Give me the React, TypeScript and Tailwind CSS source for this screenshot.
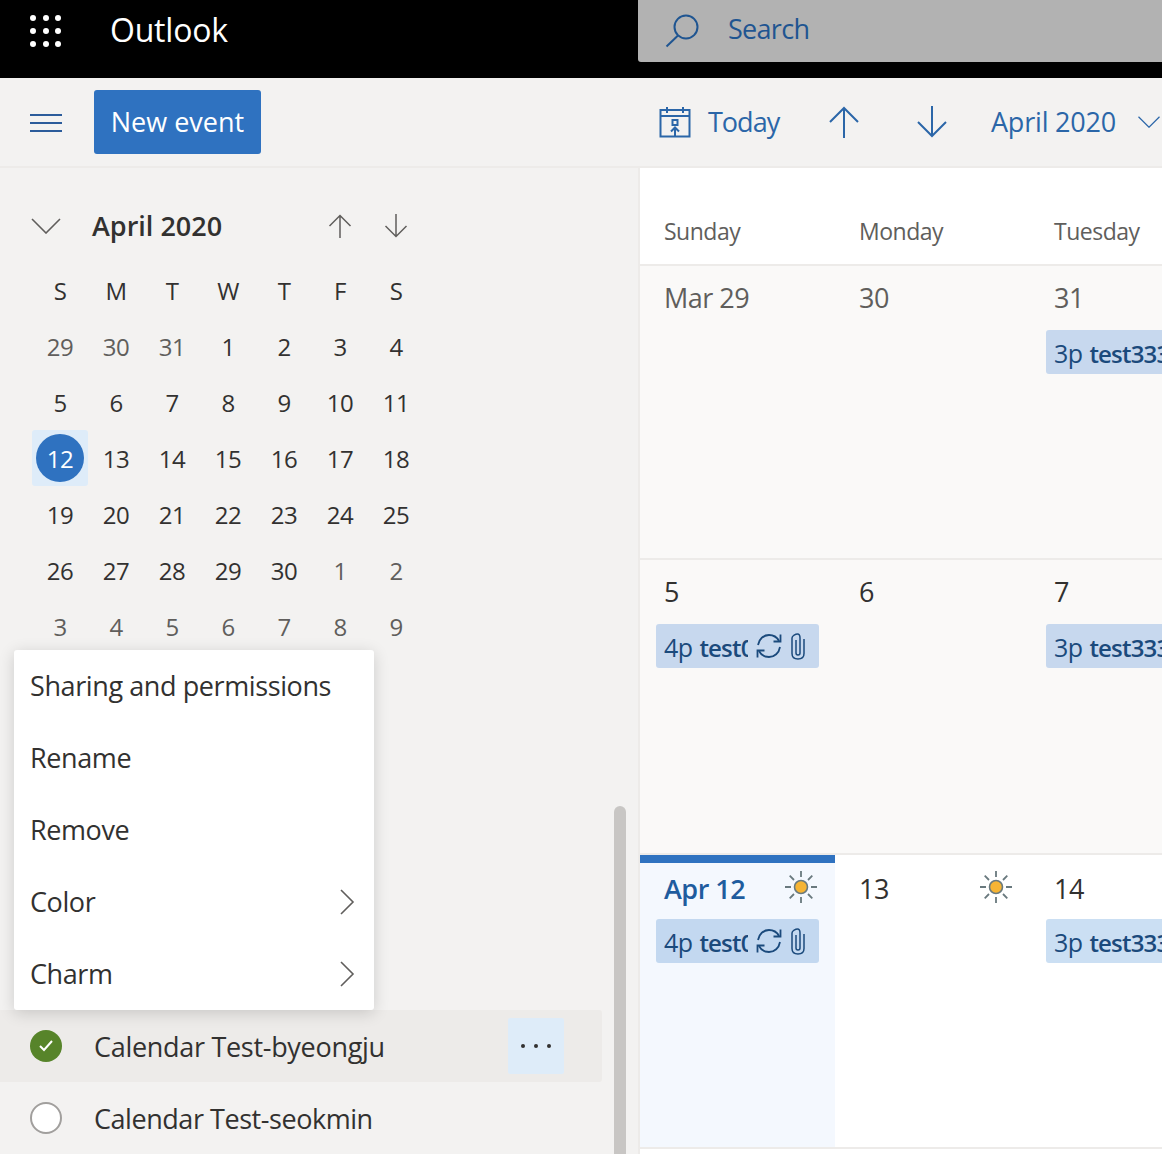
import type { ReactNode } from "react";

const weeks = [
  [29, 30, 31, 1, 2, 3, 4],
  [5, 6, 7, 8, 9, 10, 11],
  [12, 13, 14, 15, 16, 17, 18],
  [19, 20, 21, 22, 23, 24, 25],
  [26, 27, 28, 29, 30, 1, 2],
  [3, 4, 5, 6, 7, 8, 9],
];

function ArrowUp({ className, size }: { className: string; size: number }) {
  return (
    <svg width={size} height={size} viewBox="0 0 32 32" fill="none" stroke="currentColor" strokeWidth="2" className={className}>
      <path d="M16 32V2M2 16 16 2l14 14" />
    </svg>
  );
}

function ArrowDown({ className, size }: { className: string; size: number }) {
  return (
    <svg width={size} height={size} viewBox="0 0 32 32" fill="none" stroke="currentColor" strokeWidth="2" className={className}>
      <path d="M16 0v30M2 16l14 14 14-14" />
    </svg>
  );
}

function Chevron({ className, dir }: { className: string; dir: "down" | "right" }) {
  return dir === "down" ? (
    <svg width="30" height="16" viewBox="0 0 30 16" fill="none" stroke="currentColor" strokeWidth="1.6" className={className}>
      <path d="M1 1l14 14L29 1" />
    </svg>
  ) : (
    <svg width="16" height="26" viewBox="0 0 16 26" fill="none" stroke="currentColor" strokeWidth="1.6" className={className}>
      <path d="M2 1l12 12L2 25" />
    </svg>
  );
}

function Sun() {
  return (
    <svg width="32" height="32" viewBox="0 0 32 32" fill="none" stroke="#69797e" strokeWidth="1.8" className="mr-[2px] mt-[2px] shrink-0">
      <circle cx="16" cy="16" r="6.500" fill="#f6b434" strokeWidth="1.6" />
      <path d="M16 0v6M16 26v6M0 16h6M26 16h6M4.700 4.700l4.300 4.300M23 23l4.300 4.300M27.300 4.700 23 9M9 23l-4.300 4.300" />
    </svg>
  );
}

function Sync() {
  return (
    <svg width="26" height="26" viewBox="0 0 26 26" fill="none" stroke="#1b4a7c" strokeWidth="1.8">
      <path d="M2 12C3 6 7.500 2 13 2c4.500 0 8 2.200 10 6" />
      <path d="M24.500 1.500V8.500H17.500" />
      <path d="M24 14c-1 6-5.500 10-11 10-4.500 0-8-2.200-10-6" />
      <path d="M1.500 24.500V17.500H8.500" />
    </svg>
  );
}

function Clip() {
  return (
    <svg width="14" height="27" viewBox="0 0 14 27" fill="none" stroke="#1b4a7c" strokeWidth="1.500" className="shrink-0">
      <path d="M5 7v13c0 1.200.8 2 2 2s2-.8 2-2V5c0-2.400-.8-4-2.500-4S1 2.600 1 5v15.500C1 24 3.500 26 7 26s6-2 6-5.500V6" />
    </svg>
  );
}

function Chip({ time, title, wide, tint, gap }: { time: string; title: string; wide?: boolean; tint: string; gap: string }) {
  return (
    <div
      className={`flex h-[44px] items-center overflow-hidden whitespace-nowrap rounded-[3px] pl-[8px] text-[25px] tracking-[-0.6px] text-[#1b4a7c] ${tint} ${gap} ${
        wide ? "w-[163px]" : "-mr-[60px]"
      }`}
    >
      <span className="pt-[3px]">{time}</span>
      <span className={`ml-[7px] overflow-hidden pt-[3px] text-[24px] font-semibold tracking-[-0.8px] ${wide ? "w-[49px] shrink-0" : ""}`}>{title}</span>
      {wide && (
        <span className="ml-[8px] flex items-center gap-[9px]">
          <Sync />
          <Clip />
        </span>
      )}
    </div>
  );
}

function DayCell({ children, className }: { children: ReactNode; className: string }) {
  return <div className={`min-w-0 pl-[16px] pr-[16px] ${className}`}>{children}</div>;
}

function DayNum({ children, className }: { children: ReactNode; className?: string }) {
  return <div className={`h-[38px] whitespace-nowrap pl-[8px] pt-[1px] text-[27px] leading-[38px] tracking-[-0.5px] ${className ?? "text-[#323130]"}`}>{children}</div>;
}

function MenuItem({ label, more }: { label: string; more?: boolean }) {
  return (
    <div className="flex h-[72px] items-center justify-between pl-[16px] pr-[19px] text-[27px] tracking-[-0.4px] text-[#323130]">
      <span>{label}</span>
      {more && <Chevron dir="right" className="text-[#605e5c]" />}
    </div>
  );
}

export default function App() {
  return (
    <div className="relative flex h-[1154px] w-full flex-col overflow-hidden bg-[#f3f2f1] font-['Open_Sans','Noto_Sans',sans-serif]">
      {/* top bar */}
      <header className="flex h-[78px] shrink-0 items-start bg-black">
        <div className="flex h-[62px] w-[638px] items-center">
          <div className="ml-[30px] grid grid-cols-3 gap-x-[6.500px] gap-y-[7px]">
            {Array.from({ length: 9 }).map((_, i) => (
              <span key={i} className="h-[6px] w-[6px] rounded-full bg-white" />
            ))}
          </div>
          <span className="ml-[49px] pb-[2px] text-[32px] tracking-[-0.2px] text-white">Outlook</span>
        </div>
        <div className="flex h-[62px] flex-1 items-center rounded-bl-[3px] bg-[#b2b2b2] text-[#1f5591]">
          <svg width="34" height="34" viewBox="0 0 34 34" fill="none" stroke="currentColor" strokeWidth="2" className="ml-[27px]">
            <circle cx="21" cy="13" r="11.500" />
            <path d="M13 21.500 1.500 32.500" />
          </svg>
          <span className="ml-[29px] pb-[3px] text-[27px] tracking-[-0.7px]">Search</span>
        </div>
      </header>

      {/* command bar */}
      <div className="flex h-[90px] shrink-0 items-center border-b-2 border-[#edebe9]">
        <div className="flex w-[638px] items-center">
          <div className="ml-[30px] mt-[2px] flex w-[32px] flex-col gap-[6px]">
            <span className="h-[2px] bg-[#2b5c9b]" />
            <span className="h-[2px] bg-[#2b5c9b]" />
            <span className="h-[2px] bg-[#2b5c9b]" />
          </div>
          <button className="ml-[32px] h-[64px] w-[167px] rounded-[3px] bg-[#2f72c0] text-[27px] text-white">New event</button>
        </div>
        <div className="flex items-center text-[#2b66a8]">
          <svg width="32" height="32" viewBox="0 0 32 32" fill="none" stroke="currentColor" strokeWidth="2" className="ml-[21px]">
            <path d="M1.500 4h29v26.500H1.500zM1.500 10h29M8 1v6M24 1v6" />
            <path d="M13.500 14h5v5h-5zM16 31v-9M12 25.500l4-4 4 4" />
          </svg>
          <span className="ml-[17px] w-[72px] text-[27px] tracking-[-1px]">Today</span>
          <ArrowUp size={32} className="ml-[48px]" />
          <ArrowDown size={32} className="ml-[56px]" />
          <span className="ml-[43px] w-[125px] whitespace-nowrap text-[27px] tracking-[-0.2px]">April 2020</span>
          <Chevron dir="down" className="ml-[21px] h-[12px] w-[24px] shrink-0" />
        </div>
      </div>

      <div className="flex min-h-0 flex-1">
        {/* left pane */}
        <aside className="relative flex w-[638px] shrink-0 flex-col pt-[40px]">
          <div className="flex h-[36px] items-center text-[#323130]">
            <Chevron dir="down" className="ml-[31px] text-[#605e5c]" />
            <span className="ml-[31px] w-[236px] text-[27px] font-semibold">April 2020</span>
            <ArrowUp size={24} className="text-[#605e5c]" />
            <ArrowDown size={24} className="ml-[32px] text-[#605e5c]" />
          </div>
          <div className="ml-[32px] mt-[18px] grid w-[392px] grid-cols-7 text-[24px] tracking-[-0.5px]">
            {["S", "M", "T", "W", "T", "F", "S"].map((d, i) => (
              <div key={i} className="flex h-[56px] items-center justify-center pt-[2px] text-[#323130]">
                {d}
              </div>
            ))}
            {weeks.flatMap((week, w) =>
              week.map((day, i) => {
                const muted = (w === 0 && i < 3) || (w === 4 && i > 4) || w === 5;
                const today = w === 2 && i === 0;
                if (today) {
                  return (
                    <div key={`${w}-${i}`} className="flex h-[56px] items-center justify-center rounded-[3px] bg-[#deecf9]">
                      <span className="flex h-[48px] w-[48px] items-center justify-center rounded-full bg-[#2f72c0] pt-[2px] text-white">{day}</span>
                    </div>
                  );
                }
                return (
                  <div key={`${w}-${i}`} className={`flex h-[56px] items-center justify-center pt-[2px] ${muted ? "text-[#605e5c]" : "text-[#323130]"}`}>
                    {day}
                  </div>
                );
              }),
            )}
          </div>

          <div className="mt-auto flex w-[602px] flex-col">
            <div className="flex h-[72px] items-center rounded-r-[3px] bg-[#edebe9] text-[27px] tracking-[-0.3px] text-[#323130]">
              <span className="ml-[30px] flex h-[32px] w-[32px] items-center justify-center rounded-full bg-[#57842a]">
                <svg width="16" height="14" viewBox="0 0 16 14" fill="none" stroke="white" strokeWidth="2">
                  <path d="M2 7l4 4 8-9" />
                </svg>
              </span>
              <span className="ml-[32px] flex-1 pt-[2px]">Calendar Test-byeongju</span>
              <span className="mr-[38px] flex h-[56px] w-[56px] items-center justify-center gap-[9px] rounded-[2px] bg-[#deecf9]">
                <i className="h-[4px] w-[4px] rounded-full bg-[#323130]" />
                <i className="h-[4px] w-[4px] rounded-full bg-[#323130]" />
                <i className="h-[4px] w-[4px] rounded-full bg-[#323130]" />
              </span>
            </div>
            <div className="flex h-[72px] items-center text-[27px] tracking-[-0.45px] text-[#323130]">
              <span className="ml-[30px] h-[32px] w-[32px] rounded-full border-2 border-[#a19f9d] bg-white" />
              <span className="ml-[32px] pt-[2px]">Calendar Test-seokmin</span>
            </div>
          </div>

          {/* scrollbar */}
          <div className="absolute bottom-0 left-[614px] h-[348px] w-[12px] rounded-t-[6px] bg-[#c8c6c4]" />

          {/* context menu */}
          <div className="absolute left-[14px] top-[482px] w-[360px] rounded-[3px] bg-white shadow-[0_3px_16px_rgba(0,0,0,0.16)]">
            <MenuItem label="Sharing and permissions" />
            <MenuItem label="Rename" />
            <MenuItem label="Remove" />
            <MenuItem label="Color" more />
            <MenuItem label="Charm" more />
          </div>
        </aside>

        {/* month view */}
        <main className="flex min-w-0 flex-1 flex-col border-l-2 border-[#edebe9] bg-white">
          <div className="grid h-[98px] shrink-0 grid-cols-[195px_195px_1fr] border-b-2 border-[#edebe9] pt-[46px] text-[23px] tracking-[-0.5px] text-[#605e5c]">
            <div className="pl-[24px]">Sunday</div>
            <div className="pl-[24px]">Monday</div>
            <div className="pl-[24px]">Tuesday</div>
          </div>
          <div className="grid h-[294px] shrink-0 grid-cols-[195px_195px_1fr] overflow-hidden border-b-2 border-[#edebe9] bg-[#faf9f8]">
            <DayCell className="pt-[12px]">
              <DayNum className="text-[#605e5c]">Mar 29</DayNum>
            </DayCell>
            <DayCell className="pt-[12px]">
              <DayNum className="text-[#605e5c]">30</DayNum>
            </DayCell>
            <DayCell className="pt-[12px]">
              <DayNum className="text-[#605e5c]">31</DayNum>
              <Chip time="3p" title="test3333" tint="bg-[#c7d8ee]" gap="mt-[14px]" />
            </DayCell>
          </div>
          <div className="grid h-[295px] shrink-0 grid-cols-[195px_195px_1fr] overflow-hidden border-b-2 border-[#edebe9] bg-[#faf9f8]">
            <DayCell className="pt-[12px]">
              <DayNum>5</DayNum>
              <Chip time="4p" title="test0000" wide tint="bg-[#c7d8ee]" gap="mt-[14px]" />
            </DayCell>
            <DayCell className="pt-[12px]">
              <DayNum>6</DayNum>
            </DayCell>
            <DayCell className="pt-[12px]">
              <DayNum>7</DayNum>
              <Chip time="3p" title="test3333" tint="bg-[#c7d8ee]" gap="mt-[14px]" />
            </DayCell>
          </div>
          <div className="grid h-[294px] shrink-0 grid-cols-[195px_195px_1fr] overflow-hidden border-b-2 border-[#edebe9]">
            <DayCell className="border-t-[8px] border-[#2f72c0] bg-[#f4f8fe] pt-[6px]">
              <div className="flex items-start justify-between">
                <DayNum className="font-semibold text-[#1f5c9e]">Apr 12</DayNum>
                <Sun />
              </div>
              <Chip time="4p" title="test0000" wide tint="bg-[#c3d8f0]" gap="mt-[12px]" />
            </DayCell>
            <DayCell className="pt-[14px]">
              <div className="flex items-start justify-between">
                <DayNum>13</DayNum>
                <Sun />
              </div>
            </DayCell>
            <DayCell className="pt-[14px]">
              <DayNum>14</DayNum>
              <Chip time="3p" title="test3333" tint="bg-[#cbdff3]" gap="mt-[12px]" />
            </DayCell>
          </div>
        </main>
      </div>
    </div>
  );
}
